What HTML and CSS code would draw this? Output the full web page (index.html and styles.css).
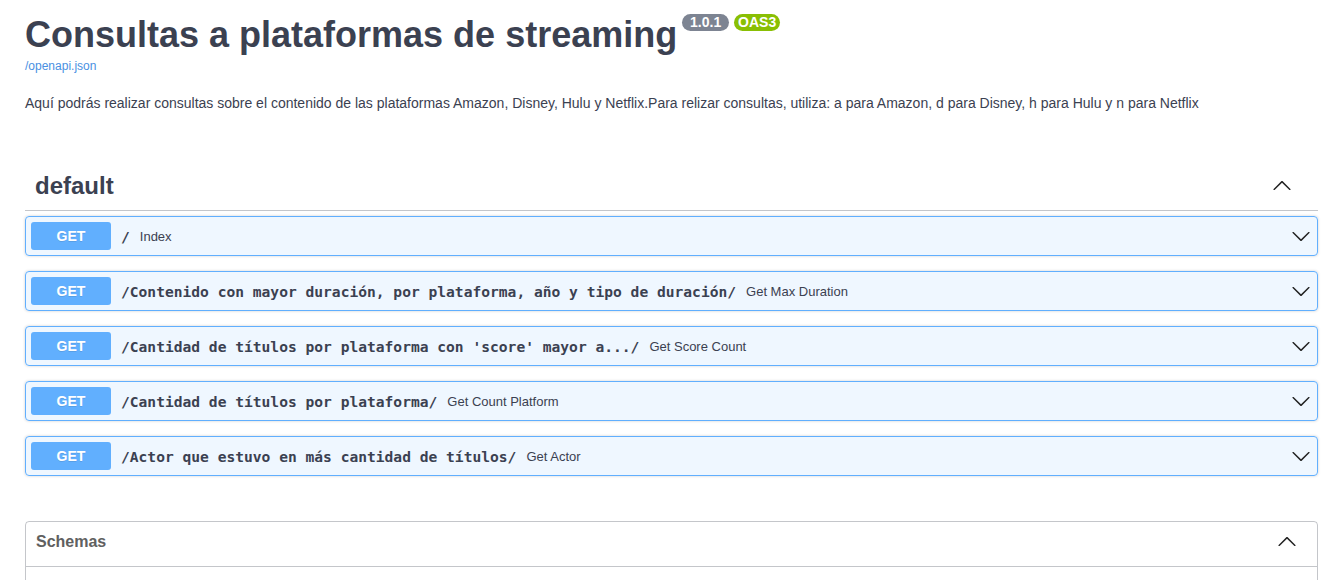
FILE: index.html
```html
<!DOCTYPE html>
<html lang="es">
<head>
<meta charset="utf-8">
<title>Consultas a plataformas de streaming</title>
<link rel="stylesheet" href="styles.css">
</head>
<body>
<div class="wrapper">
  <div class="info">
    <h2 class="title">
      <span class="title-text">Consultas a plataformas de streaming</span>
      <small class="badge badge-version"> 1.0.1 </small>
      <small class="badge badge-oas">OAS3</small>
    </h2>
    <a class="link" href="#">/openapi.json</a>
    <p class="description">Aquí podrás realizar consultas sobre el contenido de las plataformas Amazon, Disney, Hulu y Netflix.Para relizar consultas, utiliza: a para Amazon, d para Disney, h para Hulu y n para Netflix</p>
  </div>

  <div class="tag-section">
    <h3 class="tag">
      <span class="tag-name">default</span>
      <svg class="arrow arrow-tag" width="20" height="20" viewBox="0 0 20 20"><path transform="rotate(180 10 10)" d="M17.418 6.109c.272-.268.709-.268.979 0s.271.701 0 .969l-7.908 7.83c-.27.268-.707.268-.979 0l-7.908-7.830c-.27-.268-.27-.701 0-.969.271-.268.709-.268.979 0L10 13.25l7.418-7.141z"/></svg>
    </h3>

    <div class="opblock">
      <span class="method">GET</span>
      <span class="path">/</span>
      <span class="summary">Index</span>
      <svg class="arrow arrow-op" width="20" height="20" viewBox="0 0 20 20"><path d="M17.418 6.109c.272-.268.709-.268.979 0s.271.701 0 .969l-7.908 7.83c-.27.268-.707.268-.979 0l-7.908-7.83c-.27-.268-.27-.701 0-.969.271-.268.709-.268.979 0L10 13.25l7.418-7.141z"/></svg>
    </div>

    <div class="opblock">
      <span class="method">GET</span>
      <span class="path">/Contenido con mayor duración, por plataforma, año y tipo de duración/</span>
      <span class="summary">Get Max Duration</span>
      <svg class="arrow arrow-op" width="20" height="20" viewBox="0 0 20 20"><path d="M17.418 6.109c.272-.268.709-.268.979 0s.271.701 0 .969l-7.908 7.83c-.27.268-.707.268-.979 0l-7.908-7.83c-.27-.268-.27-.701 0-.969.271-.268.709-.268.979 0L10 13.25l7.418-7.141z"/></svg>
    </div>

    <div class="opblock">
      <span class="method">GET</span>
      <span class="path">/Cantidad de títulos por plataforma con 'score' mayor a.../</span>
      <span class="summary">Get Score Count</span>
      <svg class="arrow arrow-op" width="20" height="20" viewBox="0 0 20 20"><path d="M17.418 6.109c.272-.268.709-.268.979 0s.271.701 0 .969l-7.908 7.83c-.27.268-.707.268-.979 0l-7.908-7.83c-.27-.268-.27-.701 0-.969.271-.268.709-.268.979 0L10 13.25l7.418-7.141z"/></svg>
    </div>

    <div class="opblock">
      <span class="method">GET</span>
      <span class="path">/Cantidad de títulos por plataforma/</span>
      <span class="summary">Get Count Platform</span>
      <svg class="arrow arrow-op" width="20" height="20" viewBox="0 0 20 20"><path d="M17.418 6.109c.272-.268.709-.268.979 0s.271.701 0 .969l-7.908 7.83c-.27.268-.707.268-.979 0l-7.908-7.83c-.27-.268-.27-.701 0-.969.271-.268.709-.268.979 0L10 13.25l7.418-7.141z"/></svg>
    </div>

    <div class="opblock">
      <span class="method">GET</span>
      <span class="path">/Actor que estuvo en más cantidad de títulos/</span>
      <span class="summary">Get Actor</span>
      <svg class="arrow arrow-op" width="20" height="20" viewBox="0 0 20 20"><path d="M17.418 6.109c.272-.268.709-.268.979 0s.271.701 0 .969l-7.908 7.83c-.27.268-.707.268-.979 0l-7.908-7.83c-.27-.268-.27-.701 0-.969.271-.268.709-.268.979 0L10 13.25l7.418-7.141z"/></svg>
    </div>
  </div>

  <section class="models">
    <h4 class="models-head">
      <span class="models-title">Schemas</span>
      <svg class="arrow arrow-models" width="20" height="20" viewBox="0 0 20 20"><path transform="rotate(180 10 10)" d="M17.418 6.109c.272-.268.709-.268.979 0s.271.701 0 .969l-7.908 7.83c-.27.268-.707.268-.979 0l-7.908-7.83c-.27-.268-.27-.701 0-.969.271-.268.709-.268.979 0L10 13.25l7.418-7.141z"/></svg>
    </h4>
    <div class="models-body"></div>
  </section>
</div>
</body>
</html>
```

FILE: styles.css
```css
html, body {
  margin: 0;
  padding: 0;
  background: #fff;
  overflow: hidden;
  height: 580px;
}

body {
  font-family: "Liberation Sans", Arial, sans-serif;
  color: #3b4151;
}

.wrapper {
  padding: 14px 11px 0 25px;
}

.info {
  display: flex;
  flex-direction: column;
  align-items: flex-start;
}

.title {
  display: flex;
  align-items: flex-start;
  margin: 0;
  font-size: 36px;
  font-weight: 700;
  line-height: 41px;
  color: #3b4151;
}

.badge {
  margin: 0 0 0 5px;
  padding: 2px 4px;
  border-radius: 57px;
  font-size: 14px;
  line-height: 13px;
  font-weight: 700;
  color: #fff;
  white-space: pre;
}

.badge-version {
  background: #7d8492;
}

.badge-oas {
  background: #89bf04;
}

.link {
  margin-top: 4px;
  font-size: 12px;
  line-height: 14px;
  color: #4990e2;
  text-decoration: none;
}

.description {
  margin: 22px 0 0;
  font-size: 14px;
  line-height: 16px;
  color: #3b4151;
}

.tag-section {
  margin-top: 50px;
}

.tag {
  display: flex;
  align-items: center;
  margin: 0 0 5px;
  padding: 10px 20px 10px 10px;
  border-bottom: 1px solid rgba(59, 65, 81, 0.3);
  font-size: 24px;
  line-height: 29px;
  font-weight: 700;
  color: #3b4151;
}

.tag-name {
  flex: 1;
}

.arrow {
  fill: #222;
  flex: none;
}

.arrow-tag {
  margin-right: 6px;
}

.opblock {
  display: flex;
  align-items: center;
  height: 40px;
  box-sizing: border-box;
  margin: 0 0 15px;
  padding: 5px;
  border: 1px solid #61affe;
  border-radius: 4px;
  background: rgba(97, 175, 254, 0.1);
  box-shadow: 0 0 3px rgba(0, 0, 0, 0.19);
}

.method {
  min-width: 80px;
  padding: 6px 0;
  border-radius: 3px;
  background: #61affe;
  color: #fff;
  font-size: 14px;
  line-height: 16px;
  font-weight: 700;
  text-align: center;
  text-shadow: 0 1px 0 rgba(0, 0, 0, 0.1);
}

.path {
  padding: 0 10px;
  font-family: "DejaVu Sans Mono", "Liberation Mono", monospace;
  font-size: 14.6px;
  font-weight: 700;
  color: #3b4151;
  white-space: nowrap;
}

.summary {
  flex: 1;
  font-size: 13px;
  color: #3b4151;
}

.arrow-op {
  margin-right: 1px;
}

.models {
  margin-top: 45px;
  border: 1px solid rgba(59, 65, 81, 0.3);
  border-radius: 4px;
}

.models-head {
  display: flex;
  align-items: center;
  margin: 0;
  padding: 10px 20px 14px 10px;
  border-bottom: 1px solid rgba(59, 65, 81, 0.3);
  font-size: 16px;
  line-height: 20px;
  font-weight: 700;
  color: #606060;
}

.models-title {
  flex: 1;
}

.models-body {
  height: 60px;
}
```
